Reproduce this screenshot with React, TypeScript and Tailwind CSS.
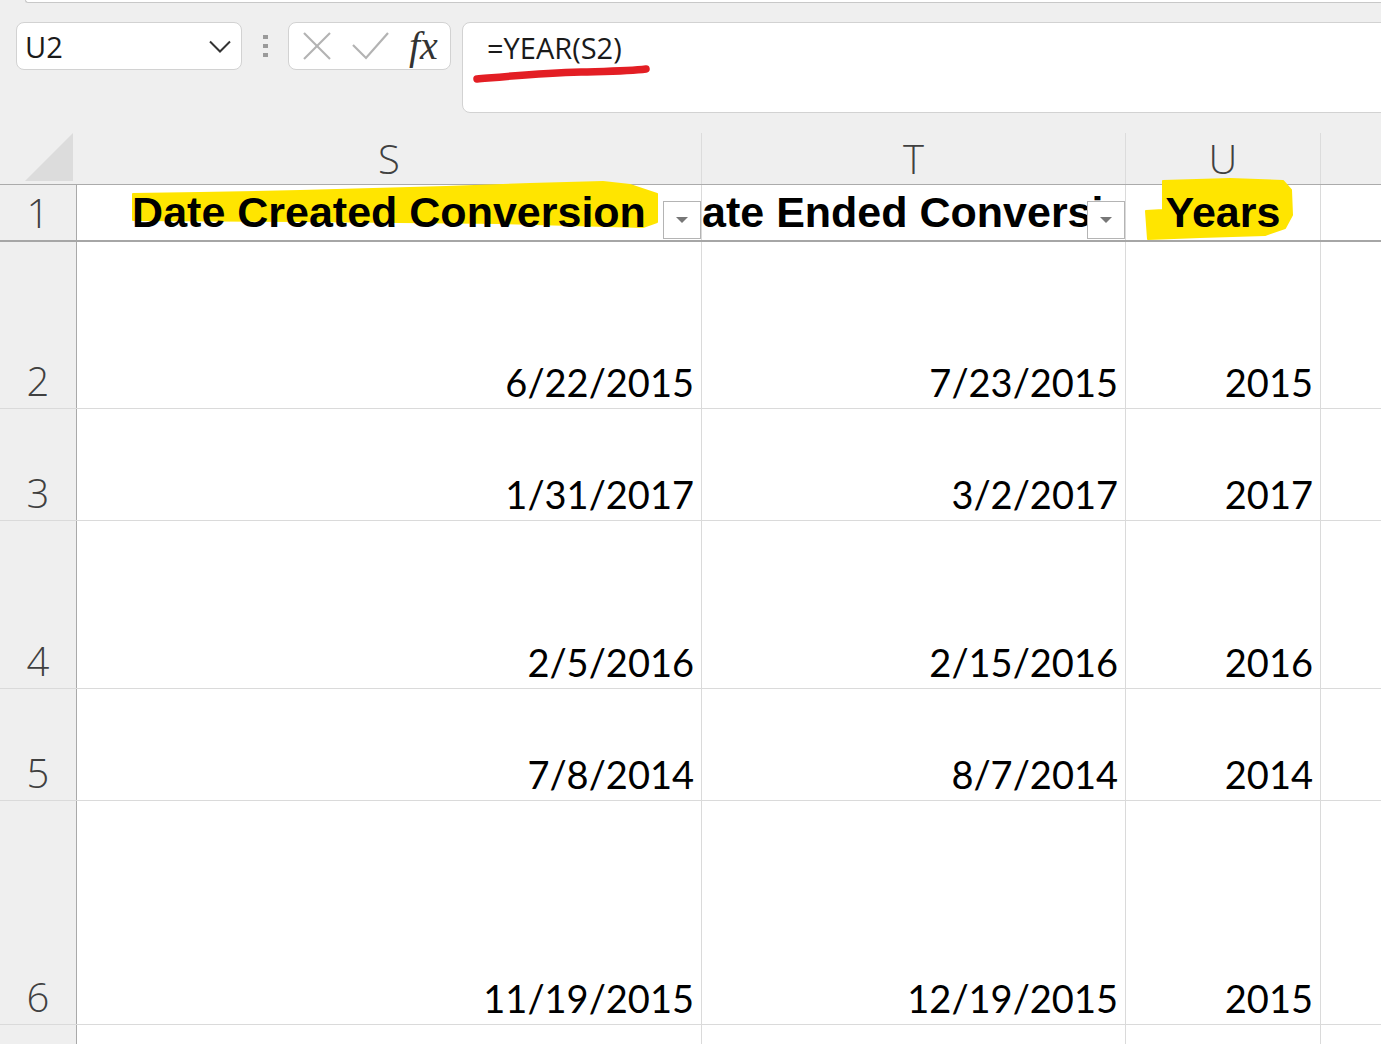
import React from "react";

const SANS = { fontFamily: '"Open Sans", "Noto Sans", sans-serif' };
const DATA = { fontFamily: 'Lato, "Open Sans", sans-serif' };
const BOLD = { fontFamily: '"Liberation Sans", Arial, sans-serif' };

type Row = { n: number; h: string; s: string; t: string; u: string };

const rows: Row[] = [
  { n: 2, h: "h-[167px]", s: "6/22/2015", t: "7/23/2015", u: "2015" },
  { n: 3, h: "h-[112px]", s: "1/31/2017", t: "3/2/2017", u: "2017" },
  { n: 4, h: "h-[168px]", s: "2/5/2016", t: "2/15/2016", u: "2016" },
  { n: 5, h: "h-[112px]", s: "7/8/2014", t: "8/7/2014", u: "2014" },
  { n: 6, h: "h-[224px]", s: "11/19/2015", t: "12/19/2015", u: "2015" },
];

function Dropdown() {
  return (
    <div className="absolute right-0 bottom-[1px] w-[38px] h-[38px] bg-white border border-[#b4b4b4] flex items-center justify-center z-20">
      <svg width="14" height="8" viewBox="0 0 14 8">
        <polygon points="1,1 13,1 7,7" fill="#777777" />
      </svg>
    </div>
  );
}

function DataCell({ w, text }: { w: string; text: string }) {
  return (
    <div className={`${w} shrink-0 h-full border-r border-[#dadada] flex items-end justify-end pr-[7px] pb-[7px]`}>
      <span className="text-[38px] leading-none text-black" style={DATA}>
        {text}
      </span>
    </div>
  );
}

export default function App() {
  return (
    <div className="w-[1381px] h-[1044px] overflow-hidden bg-[#efefef] relative">
      {/* top strip */}
      <div className="h-[3px] ml-[25px] bg-white border-b border-l border-[#c8c8c8] rounded-bl-[8px]" />

      {/* formula toolbar */}
      <div className="flex items-start pt-[19px]">
        <div className="shrink-0 ml-[16px] w-[226px] h-[48px] bg-white border border-[#d2d2d2] rounded-[8px] flex items-center justify-between pl-[8px] pr-[10px]">
          <span className="text-[29px] leading-none text-[#1a1a1a]" style={SANS}>
            U2
          </span>
          <svg width="22" height="13" viewBox="0 0 22 13">
            <polyline points="1,1.5 11,11.5 21,1.5" fill="none" stroke="#333" strokeWidth="2" />
          </svg>
        </div>
        <div className="shrink-0 w-[46px] h-[48px] flex flex-col items-center justify-center gap-[5px]">
          <div className="w-[5px] h-[4px] bg-[#9a9a9a]" />
          <div className="w-[5px] h-[4px] bg-[#9a9a9a]" />
          <div className="w-[5px] h-[4px] bg-[#9a9a9a]" />
        </div>
        <div className="shrink-0 w-[163px] h-[48px] bg-white border border-[#d2d2d2] rounded-[8px] flex items-center pl-[14px]">
          <svg width="28" height="28" viewBox="0 0 28 28">
            <line x1="1" y1="1" x2="27" y2="27" stroke="#b3b3b3" strokeWidth="2.2" />
            <line x1="27" y1="1" x2="1" y2="27" stroke="#b3b3b3" strokeWidth="2.2" />
          </svg>
          <svg width="38" height="30" viewBox="0 0 38 30" className="ml-[21px]">
            <polyline points="1,14 14,27 36,2" fill="none" stroke="#b3b3b3" strokeWidth="2.2" />
          </svg>
          <span
            className="ml-[19px] text-[40px] leading-none italic text-[#333]"
            style={{ fontFamily: '"Liberation Serif", "Times New Roman", serif' }}
          >
            fx
          </span>
        </div>
        <div className="shrink-0 ml-[11px] w-[940px] h-[91px] bg-white border border-[#d2d2d2] rounded-[8px] relative pl-[24px] pt-[10px]">
          <span className="text-[29px] leading-none text-[#1a1a1a]" style={SANS}>
            =YEAR(S2)
          </span>
          <svg className="absolute left-0 top-0" width="200" height="91" viewBox="0 0 200 91">
            <path
              d="M14 56 C 48 53, 78 50, 118 49 S 168 48, 183 46"
              fill="none"
              stroke="#e31e24"
              strokeWidth="7.5"
              strokeLinecap="round"
            />
          </svg>
        </div>
      </div>

      {/* column headers */}
      <div className="mt-[20px] flex h-[52px] border-b border-[#ababab]">
        <div className="w-[77px] shrink-0 h-full relative">
          <svg className="absolute left-[25px] top-0" width="49" height="49" viewBox="0 0 49 49">
            <polygon points="48,0 48,48 0,48" fill="#dcdcdc" />
          </svg>
        </div>
        {[
          ["w-[625px]", "S"],
          ["w-[424px]", "T"],
          ["w-[195px]", "U"],
        ].map(([w, l]) => (
          <div key={l} className={`${w} shrink-0 h-full border-r border-[#dcdcdc] flex items-center justify-center`}>
            <span className="text-[40px] leading-none font-light text-[#404040]" style={SANS}>
              {l}
            </span>
          </div>
        ))}
        <div className="flex-1" />
      </div>

      {/* row 1 */}
      <div className="flex h-[57px] border-b-2 border-[#a6a6a6] bg-white">
        <div className="w-[77px] shrink-0 h-full bg-[#efefef] border-r border-[#a9a9a9] flex items-center justify-center">
          <span className="text-[40px] leading-none font-light text-[#404040]" style={SANS}>
            1
          </span>
        </div>
        <div className="w-[625px] shrink-0 h-full border-r border-[#dadada] relative">
          <svg className="absolute left-0 top-[-10px]" width="625" height="70" viewBox="0 0 625 70">
            <polygon
              points="56,19 123,18 223,16 369,12 453,9 526,7 553,10 580,19 580,47 566,52 423,48 223,46 56,45"
              fill="#ffe500"
              stroke="#ffe500"
              strokeWidth="2"
              strokeLinejoin="round"
            />
          </svg>
          <div className="absolute inset-0 flex items-center justify-center overflow-hidden z-10">
            <span className="shrink-0 whitespace-nowrap text-[43px] leading-none font-bold text-black" style={BOLD}>
              Date Created Conversion
            </span>
          </div>
          <Dropdown />
        </div>
        <div className="w-[424px] shrink-0 h-full border-r border-[#dadada] relative">
          <div className="absolute inset-0 flex items-center justify-center overflow-hidden z-10">
            <span className="shrink-0 whitespace-nowrap text-[43px] leading-none font-bold text-black" style={BOLD}>
              Date Ended Conversion
            </span>
          </div>
          <Dropdown />
        </div>
        <div className="w-[195px] shrink-0 h-full border-r border-[#dadada] relative">
          <svg className="absolute left-0 top-[-10px]" width="195" height="70" viewBox="0 0 195 70">
            <polygon
              points="20,36 37,35 37,6 104,4 157,6 165,15 166,40 159,53 139,60 74,62 22,64"
              fill="#ffe500"
              stroke="#ffe500"
              strokeWidth="2"
              strokeLinejoin="round"
            />
          </svg>
          <div className="absolute inset-0 flex items-center justify-center overflow-hidden z-10">
            <span className="shrink-0 whitespace-nowrap text-[43px] leading-none font-bold text-black" style={BOLD}>
              Years
            </span>
          </div>
        </div>
        <div className="flex-1" />
      </div>

      {/* data rows */}
      {rows.map((r) => (
        <div key={r.n} className={`flex ${r.h} border-b border-[#dadada] bg-white`}>
          <div className="w-[77px] shrink-0 h-full bg-[#efefef] border-r border-[#a9a9a9] flex items-end justify-center pb-[7px]">
            <span className="text-[40px] leading-none font-light text-[#404040]" style={SANS}>
              {r.n}
            </span>
          </div>
          <DataCell w="w-[625px]" text={r.s} />
          <DataCell w="w-[424px]" text={r.t} />
          <DataCell w="w-[195px]" text={r.u} />
          <div className="flex-1" />
        </div>
      ))}
      <div className="flex h-[100px] bg-white">
        <div className="w-[77px] shrink-0 h-full bg-[#efefef] border-r border-[#a9a9a9]" />
        <div className="w-[625px] shrink-0 h-full border-r border-[#dadada]" />
        <div className="w-[424px] shrink-0 h-full border-r border-[#dadada]" />
        <div className="w-[195px] shrink-0 h-full border-r border-[#dadada]" />
        <div className="flex-1" />
      </div>
    </div>
  );
}
